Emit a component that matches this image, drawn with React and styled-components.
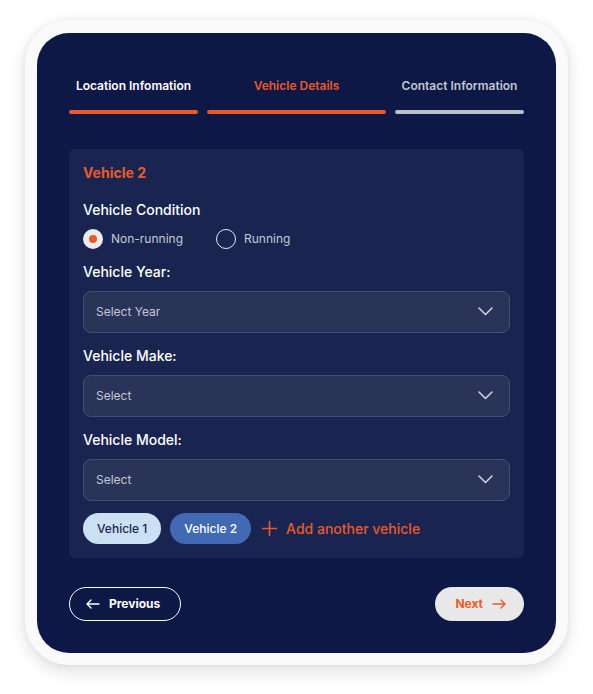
import React from "react";
import styled, { createGlobalStyle } from "styled-components";

const Global = createGlobalStyle`
  html, body { margin: 0; padding: 0; background: #ffffff; }
  body { font-family: Inter, "Noto Sans", Arial, sans-serif; -webkit-font-smoothing: antialiased; }
  * { box-sizing: border-box; }
`;

const ORANGE = "#e95a2b";

const Page = styled.div`
  padding: 20px 25px 29px 25px;
  width: 593px;
`;

const Frame = styled.div`
  width: 543px;
  background: #fafafa;
  border-radius: 44px;
  padding: 13px 12px 12px 12px;
  box-shadow: 0 6px 18px rgba(0, 0, 0, 0.13), 0 0 6px rgba(0, 0, 0, 0.05);
`;

const Card = styled.div`
  background: #0d1846;
  border-radius: 32px;
  padding: 44px 32px 32px 32px;
`;

const Tabs = styled.div`
  display: grid;
  grid-template-columns: 129fr 179fr 129fr;
  column-gap: 9px;
`;

const Tab = styled.div`
  display: flex;
  flex-direction: column;
  align-items: stretch;
  gap: 16px;
`;

const TabLabel = styled.div`
  text-align: center;
  font-size: 12px;
  line-height: 17px;
  font-weight: 600;
  color: ${(p) => p.$color};
  white-space: nowrap;
`;

const TabBar = styled.div`
  height: 3.5px;
  border-radius: 2px;
  background: ${(p) => p.$color};
`;

const Panel = styled.div`
  margin-top: 35px;
  background: #1a2450;
  border-radius: 6px;
  padding: 15px 14px 14px 14px;
  display: flex;
  flex-direction: column;
`;

const PanelTitle = styled.div`
  color: ${ORANGE};
  font-size: 14px;
  line-height: 18px;
  font-weight: 700;
`;

const Label = styled.div`
  margin-top: ${(p) => p.$mt}px;
  color: #ffffff;
  font-size: 14px;
  line-height: 18px;
  font-weight: 500;
`;

const RadioRow = styled.div`
  margin-top: 10px;
  display: flex;
  align-items: center;
  gap: 33px;
`;

const RadioOption = styled.label`
  display: flex;
  align-items: center;
  gap: 8px;
  color: #c5c9d6;
  font-size: 12px;
  line-height: 20px;
`;

const RadioCircle = styled.span`
  width: 20px;
  height: 20px;
  border-radius: 50%;
  display: flex;
  align-items: center;
  justify-content: center;
  background: ${(p) => (p.$checked ? "#ececec" : "transparent")};
  border: ${(p) => (p.$checked ? "none" : "1.5px solid #e8e8ee")};
  &::after {
    content: "";
    display: ${(p) => (p.$checked ? "block" : "none")};
    width: 8px;
    height: 8px;
    border-radius: 50%;
    background: ${ORANGE};
  }
`;

const Select = styled.div`
  margin-top: 10px;
  height: 42px;
  border-radius: 8px;
  background: #2a3459;
  border: 1px solid #454f76;
  display: flex;
  align-items: center;
  justify-content: space-between;
  padding: 0 16px 0 12px;
  color: #c3c7d4;
  font-size: 12px;
`;

const ChipRow = styled.div`
  margin-top: 12px;
  display: flex;
  align-items: center;
`;

const Chip = styled.button`
  height: 31px;
  padding: 0 14px;
  border: none;
  border-radius: 16px;
  font-family: inherit;
  font-size: 12px;
  font-weight: 500;
  margin-right: ${(p) => p.$mr}px;
  background: ${(p) => (p.$active ? "#426ab4" : "#cce0f3")};
  color: ${(p) => (p.$active ? "#ffffff" : "#1b2450")};
`;

const AddLink = styled.div`
  display: flex;
  align-items: center;
  gap: 9px;
  color: ${ORANGE};
  font-size: 14px;
  font-weight: 500;
`;

const Footer = styled.div`
  margin-top: 29px;
  display: flex;
  justify-content: space-between;
  align-items: center;
`;

const NavButton = styled.button`
  height: 34px;
  border-radius: 17px;
  display: flex;
  align-items: center;
  gap: 9px;
  font-family: inherit;
  font-size: 12px;
  font-weight: 700;
  ${(p) =>
    p.$primary
      ? `background: #e8e8e8; color: ${ORANGE}; border: none; padding: 0 18px 0 20px;`
      : `background: transparent; color: #ffffff; border: 1.5px solid #ffffff; padding: 0 20px 0 16px;`}
`;

const Chevron = () => (
  <svg width="15" height="9" viewBox="0 0 15 9" fill="none">
    <path d="M1 1l6.5 6.5L14 1" stroke="#d3d6e0" strokeWidth="1.5" strokeLinecap="round" strokeLinejoin="round" />
  </svg>
);

const Plus = () => (
  <svg width="15" height="15" viewBox="0 0 15 15" fill="none">
    <path d="M7.5 0.5v14M0.5 7.5h14" stroke={ORANGE} strokeWidth="1.6" strokeLinecap="round" />
  </svg>
);

const Arrow = ({ dir, color }) => (
  <svg width="14" height="10" viewBox="0 0 14 10" fill="none">
    {dir === "left" ? (
      <path d="M13 5H1M5 1L1 5l4 4" stroke={color} strokeWidth="1.4" strokeLinecap="round" strokeLinejoin="round" />
    ) : (
      <path d="M1 5h12M9 1l4 4-4 4" stroke={color} strokeWidth="1.4" strokeLinecap="round" strokeLinejoin="round" />
    )}
  </svg>
);

const tabs = [
  { label: "Location Infomation", text: "#ffffff", bar: ORANGE },
  { label: "Vehicle Details", text: ORANGE, bar: ORANGE },
  { label: "Contact Information", text: "#c2c6d0", bar: "#b9bec8" },
];

const fields = [
  { label: "Vehicle Year:", placeholder: "Select Year" },
  { label: "Vehicle Make:", placeholder: "Select" },
  { label: "Vehicle Model:", placeholder: "Select" },
];

export default function App() {
  return (
    <>
      <Global />
      <Page>
        <Frame>
          <Card>
            <Tabs>
              {tabs.map((t) => (
                <Tab key={t.label}>
                  <TabLabel $color={t.text}>{t.label}</TabLabel>
                  <TabBar $color={t.bar} />
                </Tab>
              ))}
            </Tabs>
            <Panel>
              <PanelTitle>Vehicle 2</PanelTitle>
              <Label $mt={19}>Vehicle Condition</Label>
              <RadioRow>
                <RadioOption>
                  <RadioCircle $checked />
                  Non-running
                </RadioOption>
                <RadioOption>
                  <RadioCircle />
                  Running
                </RadioOption>
              </RadioRow>
              {fields.map((f) => (
                <React.Fragment key={f.label}>
                  <Label $mt={14}>{f.label}</Label>
                  <Select>
                    <span>{f.placeholder}</span>
                    <Chevron />
                  </Select>
                </React.Fragment>
              ))}
              <ChipRow>
                <Chip $mr={9}>Vehicle 1</Chip>
                <Chip $active $mr={11}>Vehicle 2</Chip>
                <AddLink>
                  <Plus />
                  Add another vehicle
                </AddLink>
              </ChipRow>
            </Panel>
            <Footer>
              <NavButton>
                <Arrow dir="left" color="#ffffff" />
                Previous
              </NavButton>
              <NavButton $primary>
                Next
                <Arrow dir="right" color={ORANGE} />
              </NavButton>
            </Footer>
          </Card>
        </Frame>
      </Page>
    </>
  );
}
